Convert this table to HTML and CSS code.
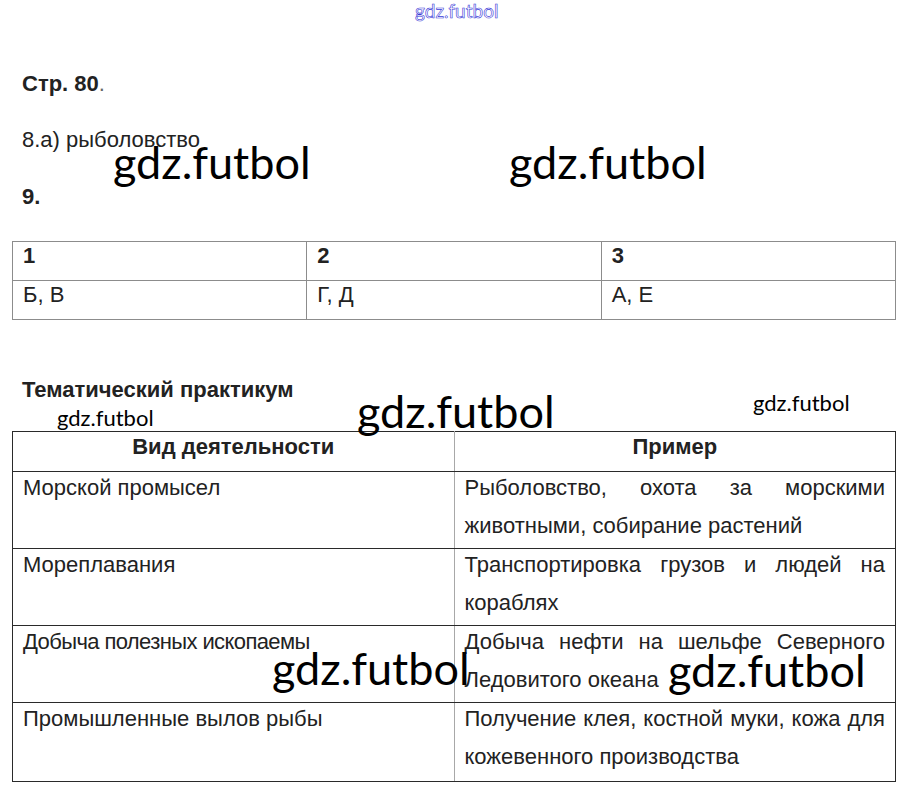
FILE: index.html
```html
<!DOCTYPE html>
<html lang="ru">
<head>
<meta charset="utf-8">
<title>Стр. 80</title>
<link rel="stylesheet" href="styles.css">
</head>
<body>
<div class="page">
  <p class="heading first">Стр. 80<span class="dot">.</span></p>
  <p class="line answer">8.а) рыболовство</p>
  <p class="heading nine">9.</p>

  <table class="grid3">
    <tr class="head"><td>1</td><td>2</td><td>3</td></tr>
    <tr><td>Б, В</td><td>Г, Д</td><td>А, Е</td></tr>
  </table>

  <p class="heading practicum">Тематический практикум</p>

  <table class="grid2">
    <tr class="thead"><th>Вид деятельности</th><th>Пример</th></tr>
    <tr>
      <td><span class="l1">Морской промысел</span></td>
      <td><span class="l1 jline">Рыболовство, охота за морскими</span><span class="l2">животными, собирание растений</span></td>
    </tr>
    <tr>
      <td><span class="l1">Мореплавания</span></td>
      <td><span class="l1 jline">Транспортировка грузов и людей на</span><span class="l2">кораблях</span></td>
    </tr>
    <tr>
      <td><span class="l1 narrow">Добыча полезных ископаемы</span></td>
      <td><span class="l1 jline">Добыча нефти на шельфе Северного</span><span class="l2">Ледовитого океана</span></td>
    </tr>
    <tr class="last">
      <td><span class="l1">Промышленные вылов рыбы</span></td>
      <td><span class="l1 jline">Получение клея, костной муки, кожа для</span><span class="l2">кожевенного производства</span></td>
    </tr>
  </table>

  <div class="wm wm-top">gdz.futbol</div>
  <div class="wm wm-big wm-a">gdz.futbol</div>
  <div class="wm wm-big wm-b">gdz.futbol</div>
  <div class="wm wm-big wm-c">gdz.futbol</div>
  <div class="wm wm-big wm-d">gdz.futbol</div>
  <div class="wm wm-big wm-e">gdz.futbol</div>
  <div class="wm wm-small wm-f">gdz.futbol</div>
  <div class="wm wm-small wm-g">gdz.futbol</div>
</div>
</body>
</html>
```

FILE: styles.css
```css
html, body {
  margin: 0;
  padding: 0;
  background: #ffffff;
}

.page {
  position: relative;
  width: 910px;
  height: 799px;
  padding: 0 14px 0 12px;
  box-sizing: border-box;
  font-family: "Liberation Sans", Arial, sans-serif;
  font-size: 22px;
  color: #222222;
  overflow: hidden;
}

p {
  margin: 0;
  line-height: 26px;
  padding-left: 10px;
}

.heading {
  font-weight: bold;
}

.dot {
  font-weight: normal;
  color: #666;
}

.first { margin-top: 71px; }
.answer { margin-top: 30px; }
.nine { margin-top: 31px; }
.practicum { margin-top: 57px; }

table {
  border-collapse: collapse;
  width: 884px;
  table-layout: fixed;
}

.grid3 {
  margin-top: 31px;
}

.grid3 td {
  border: 1px solid #8c8c8c;
  padding: 1px 10px 11px 10px;
  line-height: 26px;
  vertical-align: top;
  width: 33.33%;
}

.grid3 .head td {
  font-weight: bold;
}

.grid2 {
  margin-top: 28px;
}

.grid2 th, .grid2 td {
  border-top: 1px solid #2a2a2a;
  border-bottom: 1px solid #2a2a2a;
  border-left: 1px solid #a8a8a8;
  border-right: 1px solid #a8a8a8;
  padding: 0 10px;
  vertical-align: top;
  text-align: left;
  width: 50%;
}

.grid2 tr > :first-child { border-left-color: #2a2a2a; }
.grid2 tr > :last-child { border-right-color: #2a2a2a; }

.grid2 th {
  font-weight: bold;
  text-align: center;
  line-height: 30px;
  padding-bottom: 9px;
}

.grid2 td {
  height: 76px;
}

.grid2 .last td {
  height: 78px;
}

.l1 {
  display: block;
  line-height: 32px;
  white-space: nowrap;
}

.l2 {
  display: block;
  line-height: 44px;
  white-space: nowrap;
}

.jline {
  text-align: justify;
  text-align-last: justify;
}

.narrow {
  letter-spacing: -0.6px;
}

.wm {
  position: absolute;
  font-family: Lato, "Open Sans", sans-serif;
  line-height: 1;
  white-space: nowrap;
  color: #000;
}

.wm-big { font-size: 45px; }
.wm-small { font-size: 22px; }

.wm-top {
  font-size: 19px;
  left: 415px;
  top: 1px;
  color: #fff;
  -webkit-text-stroke: 0.6px #3a3ad8;
}

.wm-a { left: 113px; top: 140px; }
.wm-b { left: 509px; top: 140px; }
.wm-c { left: 357px; top: 389px; }
.wm-d { left: 272px; top: 646px; }
.wm-e { left: 668px; top: 648px; }
.wm-f { left: 57px; top: 407px; }
.wm-g { left: 753px; top: 392px; }
```
